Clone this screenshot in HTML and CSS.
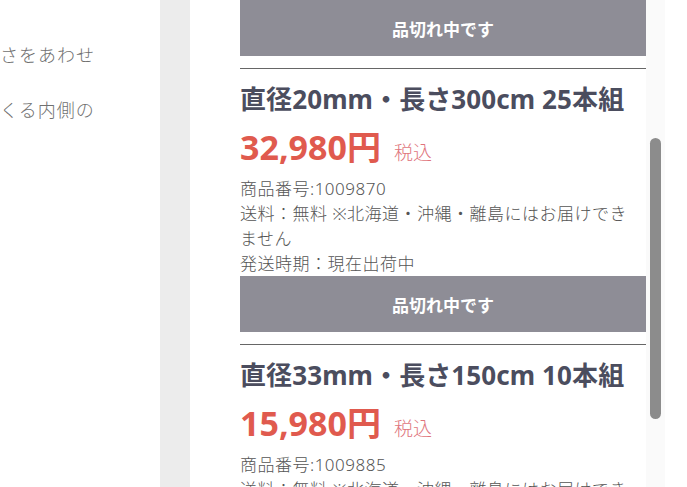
FILE: index.html
```html
<!DOCTYPE html>
<html>
<head>
    <title>商品一覧</title>
    <link rel="stylesheet" href="styles.css">
</head>
<body>
    <div class="page">
        <div class="intro">
            <p>さをあわせ</p>
            <p>くる内側の</p>
        </div>
        <div class="gutter"></div>
        <div class="panel">
            <div class="soldout">品切れ中です</div>

            <div class="item">
                <h2 class="item-title">直径20mm・長さ300cm 25本組</h2>
                <div class="price">32,980円<span class="tax">税込</span></div>
                <div class="info">
                    <p>商品番号:1009870</p>
                    <p>送料：無料 ※北海道・沖縄・離島にはお届けできません</p>
                    <p>発送時期：現在出荷中</p>
                </div>
                <div class="soldout">品切れ中です</div>
            </div>

            <div class="item">
                <h2 class="item-title">直径33mm・長さ150cm 10本組</h2>
                <div class="price">15,980円<span class="tax">税込</span></div>
                <div class="info">
                    <p>商品番号:1009885</p>
                    <p>送料：無料 ※北海道・沖縄・離島にはお届けできません</p>
                    <p>発送時期：現在出荷中</p>
                </div>
                <div class="soldout">品切れ中です</div>
            </div>
        </div>
        <div class="track">
            <div class="thumb"></div>
        </div>
    </div>
</body>
</html>
```

FILE: styles.css
```css
body {
    margin: 0;
    font-family: "Noto Sans", "Noto Sans CJK JP", sans-serif;
    background-color: #fff;
    overflow: hidden;
}
.page {
    display: flex;
    height: 487px;
    overflow: hidden;
}
.intro {
    width: 160px;
    flex-shrink: 0;
    padding-top: 27px;
    color: #707070;
    font-family: "Noto Sans CJK JP", sans-serif;
    font-size: 18px;
    font-weight: 300;
    letter-spacing: 1px;
    line-height: 55px;
    white-space: nowrap;
    overflow: hidden;
}
.intro p {
    margin: 0;
}
.gutter {
    width: 30px;
    flex-shrink: 0;
    background-color: #ececec;
}
.panel {
    width: 406px;
    flex-shrink: 0;
    padding-left: 50px;
    background-color: #fff;
}
.soldout {
    height: 56px;
    display: flex;
    align-items: center;
    justify-content: center;
    background-color: #8e8d96;
    color: #fff;
    font-family: "Noto Sans CJK JP", sans-serif;
    font-size: 17px;
    font-weight: bold;
}
.item {
    margin-top: 12px;
    border-top: 1px solid #666;
}
.item-title {
    margin: 12px 0 0;
    font-size: 26px;
    line-height: 36px;
    letter-spacing: 0.1px;
    color: #4b4d5e;
}
.price {
    margin-top: 8px;
    font-size: 34px;
    line-height: 44px;
    font-weight: bold;
    color: #e05a4e;
}
.tax {
    margin-left: 13px;
    font-family: "Noto Sans CJK JP", sans-serif;
    font-size: 19px;
    font-weight: 300;
    color: #e0747c;
}
.info {
    margin-top: 2px;
    padding-right: 16px;
    font-size: 17px;
    font-weight: 300;
    line-height: 25px;
    letter-spacing: 0.5px;
    color: #555;
}
.info p {
    margin: 0;
}
.track {
    width: 19px;
    flex-shrink: 0;
    background-color: #fafafa;
}
.thumb {
    width: 11px;
    height: 281px;
    margin: 138px 0 0 4px;
    border-radius: 6px;
    background-color: #8c8c8c;
}
```
